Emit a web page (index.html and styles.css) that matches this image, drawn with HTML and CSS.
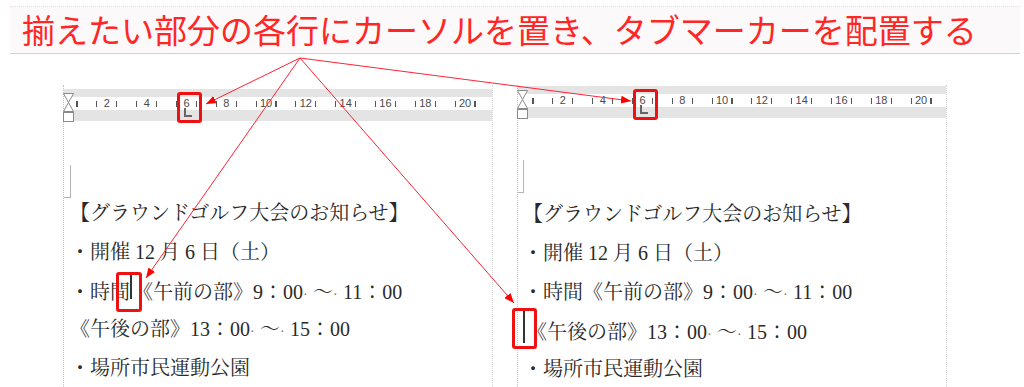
FILE: index.html
```html
<!DOCTYPE html>
<html lang="ja">
<head>
    <meta charset="UTF-8">
    <title>タブマーカーの配置</title>
    <link rel="stylesheet" href="styles.css">
</head>
<body>
<div class="banner">揃えたい部分の各行にカーソルを置き、タブマーカーを配置する</div>

<div class="pages">
    <!-- 左：タブ設定前 -->
    <div class="page page-left">
        <div class="ruler">
            <svg class="indent" width="11" height="30" viewBox="0 0 11 30">
                <path d="M0.5 0.5 H10.5 L5.5 9.5 Z" fill="#fff" stroke="#8a8a8a"/>
                <path d="M5.5 9.5 L10.5 18.5 H0.5 Z" fill="#fff" stroke="#8a8a8a"/>
                <rect x="0.5" y="19.5" width="10" height="9" fill="#fff" stroke="#8a8a8a"/>
            </svg>
            <div class="band"></div>
            <div class="scale">
                <span>2</span><span>4</span><span class="tab">6<span class="tab-l"></span><span class="hl"></span></span><span>8</span><span>10</span><span>12</span><span>14</span><span>16</span><span>18</span><span>20</span>
            </div>
            <div class="band band-low"></div>
        </div>
        <div class="doc">
            <div class="corner"></div>
            <p>【グラウンドゴルフ大会のお知らせ】</p>
            <p>・開催 12 月 6 日（土）</p>
            <p>・時間<span class="caret"><span class="hl"></span></span>《午前の部》9：00<span class="sp">·</span>～<span class="sp">·</span>11：00</p>
            <p>《午後の部》13：00<span class="sp">·</span>～<span class="sp">·</span>15：00</p>
            <p>・場所市民運動公園</p>
        </div>
    </div>

    <!-- 右：タブ設定後 -->
    <div class="page page-right">
        <div class="ruler">
            <svg class="indent" width="11" height="30" viewBox="0 0 11 30">
                <path d="M0.5 0.5 H10.5 L5.5 9.5 Z" fill="#fff" stroke="#8a8a8a"/>
                <path d="M5.5 9.5 L10.5 18.5 H0.5 Z" fill="#fff" stroke="#8a8a8a"/>
                <rect x="0.5" y="19.5" width="10" height="9" fill="#fff" stroke="#8a8a8a"/>
            </svg>
            <div class="band"></div>
            <div class="scale">
                <span>2</span><span>4</span><span class="tab">6<span class="tab-l"></span><span class="hl"></span></span><span>8</span><span>10</span><span>12</span><span>14</span><span>16</span><span>18</span><span>20</span>
            </div>
            <div class="band band-low"></div>
        </div>
        <div class="doc">
            <div class="corner"></div>
            <p>【グラウンドゴルフ大会のお知らせ】</p>
            <p>・開催 12 月 6 日（土）</p>
            <p>・時間《午前の部》9：00<span class="sp">·</span>～<span class="sp">·</span>11：00</p>
            <p><span class="caret caret-tall"><span class="hl"></span></span>《午後の部》13：00<span class="sp">·</span>～<span class="sp">·</span>15：00</p>
            <p>・場所市民運動公園</p>
        </div>
    </div>
</div>

<svg class="arrows" width="1024" height="387" viewBox="0 0 1024 387">
    <defs>
        <marker id="head" markerWidth="10" markerHeight="8" refX="10" refY="4" orient="auto" markerUnits="userSpaceOnUse">
            <path d="M0 0 L10 4 L0 8 Z" fill="#f00"/>
        </marker>
    </defs>
    <g stroke="#f23" stroke-width="1" fill="none">
        <line x1="300" y1="58" x2="206" y2="104" marker-end="url(#head)"/>
        <line x1="300" y1="58" x2="146" y2="278" marker-end="url(#head)"/>
        <line x1="300" y1="58" x2="514" y2="303" marker-end="url(#head)"/>
        <line x1="300" y1="58" x2="631" y2="101" marker-end="url(#head)"/>
    </g>
</svg>
</body>
</html>
```

FILE: styles.css
```css
*{
    margin: 0px;
    padding: 0px;
}
body{
    width: 1024px;
    height: 387px;
    overflow: hidden;
    position: relative;
    background: #fff;
    font-family: "Noto Sans CJK JP", sans-serif;
}
.banner{
    margin: 6px 4px 0 10px;
    height: 48px;
    box-sizing: border-box;
    padding-left: 12px;
    background: #fbf9f9;
    border-top: 1px dotted #ecdcdc;
    border-bottom: 1px solid #d2d2d2;
    color: #ff2626;
    font-size: 33px;
    line-height: 45px;
    letter-spacing: 0px;
    white-space: nowrap;
}
.pages{
    display: flex;
    gap: 24px;
    margin-top: 31px;
    padding-left: 63px;
}
.page{
    width: 430px;
    height: 302px;
    box-sizing: border-box;
    border-left: 1px dotted #c4c4c4;
    border-right: 1px dotted #d6d6d6;
}

/* ルーラー */
.ruler{
    position: relative;
    height: 32px;
}
.page-left .ruler{margin-top: 4px;}
.page-right .ruler{margin-top: 1px;}
.band{
    height: 8px;
    background: #e4e4e4;
}
.band-low{height: 11px;}
.scale{
    height: 13px;
    display: flex;
    padding-left: 23px;
    font-family: "Liberation Sans", sans-serif;
    font-size: 11px;
    line-height: 13px;
    color: #4a4a4a;
    background-image: repeating-linear-gradient(90deg, transparent 0 9.45px, #555 9.45px 10.6px, transparent 10.6px 19.9px);
    background-size: calc(100% - 3px) 6px;
    background-position: 3px center;
    background-repeat: no-repeat;
}
.page-right .scale{
    padding-left: 25px;
    background-position: 5px center;
    background-size: calc(100% - 5px) 6px;
}
.scale span{
    width: 39.8px;
    flex: none;
    text-align: center;
}
.scale .tab{position: relative;}
.scale .tab-l{
    position: absolute;
    left: 50%;
    top: 11px;
    width: 6px;
    height: 7px;
    margin-left: -2px;
    border-left: 2px solid #666;
    border-bottom: 2px solid #666;
}
.indent{
    position: absolute;
    left: -1px;
    top: 4px;
}
.hl{
    position: absolute;
    box-sizing: border-box;
    border: 3px solid #ee1111;
    border-radius: 3px;
}
.tab .hl{
    left: 50%;
    margin-left: -9px;
    top: -5px;
    width: 25px;
    height: 31px;
}

/* 本文 */
.doc{
    padding-left: 6px;
    font-family: "Liberation Serif", "Noto Serif CJK JP", "Noto Sans CJK JP", serif;
    font-size: 20px;
    color: #2a2a2a;
}
.page-right .doc{padding-left: 5px;}
.corner{
    width: 6px;
    height: 32px;
    margin: 44px 0 -4px -6px;
    border-right: 1px solid #b4b4b4;
    border-bottom: 1px solid #b4b4b4;
}
.page-right .corner{
    margin: 42px 0 2px -5px;
    width: 5px;
}
.doc p{
    height: 38.75px;
    line-height: 38.75px;
    white-space: nowrap;
}
.sp{
    display: inline-block;
    width: 10px;
    color: #777;
    font-size: 14px;
}
.caret{
    display: inline-block;
    position: relative;
    width: 2px;
    height: 27px;
    margin-right: 1px;
    background: #333;
}
.caret .hl{
    left: -14px;
    top: 0px;
    width: 26px;
    height: 40px;
}
.caret-tall{
    height: 32px;
    margin-right: 2px;
    vertical-align: -4px;
}
.caret-tall .hl{
    left: -11px;
    top: -3px;
    width: 25px;
    height: 41px;
}

.arrows{
    position: absolute;
    left: 0;
    top: 0;
    pointer-events: none;
}
```
